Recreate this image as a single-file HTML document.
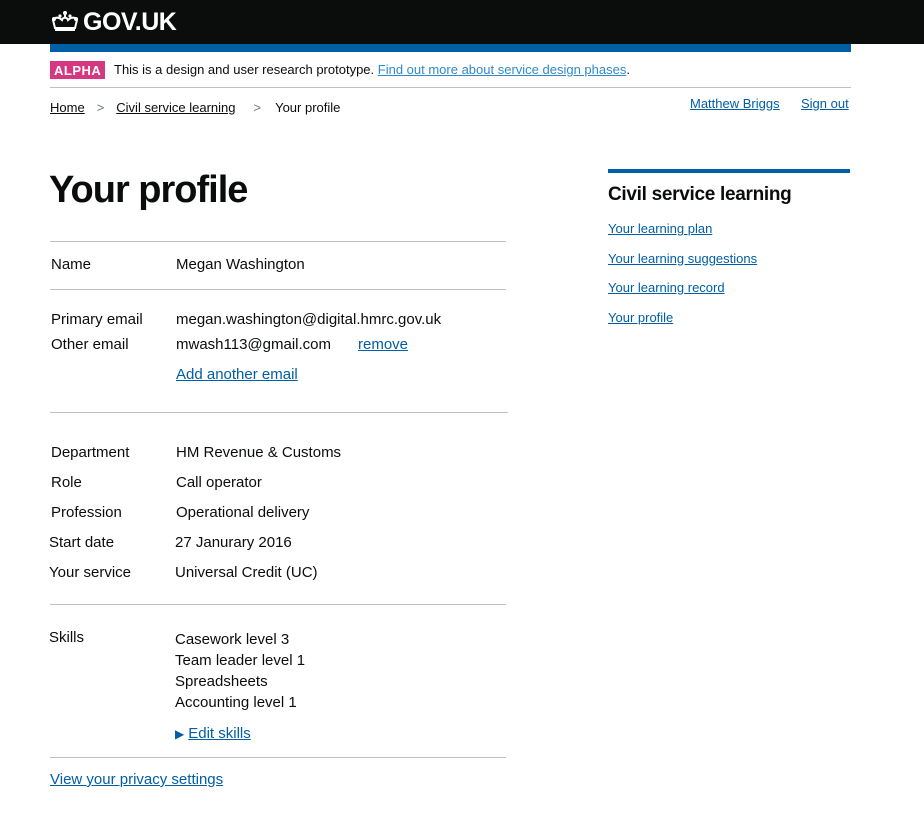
<!DOCTYPE html>
<html><head><meta charset="utf-8"><style>
*{margin:0;padding:0;box-sizing:border-box}
body{width:924px;height:820px;background:#fff;font-family:"Liberation Sans",Arial,sans-serif;color:#0b0c0c;position:relative;overflow:hidden}
.abs{position:absolute;white-space:nowrap}
a{color:#005ea5;text-decoration:underline}
.hdr{position:absolute;left:0;top:0;width:924px;height:44px;background:#0b0c0c}
.blue{position:absolute;left:50px;top:44px;width:801px;height:8px;background:#005ea5}
.hr{position:absolute;height:1px;background:#bfc1c3}
.f15{font-size:15px}
.f13{font-size:13px}
.bc a{color:#0b0c0c}
</style></head><body>
<div class="hdr"></div>
<div class="abs" style="left:50px;top:8px;color:#fff;font-weight:bold;font-size:25px;letter-spacing:-0.5px">
<svg width="30" height="22" viewBox="0 0 30 22" style="vertical-align:-2px;margin-right:3px"><g fill="#fff"><circle cx="15" cy="3" r="2"/><rect x="14" y="1" width="2" height="7"/><path d="M3 10c3-4 7-2 9 0 1-3 5-3 6 0 2-2 6-4 9 0l-2 8H5z" fill="none" stroke="#fff" stroke-width="2"/><rect x="5" y="18" width="20" height="3"/><circle cx="4" cy="9" r="2"/><circle cx="26" cy="9" r="2"/><circle cx="10" cy="6" r="1.6"/><circle cx="20" cy="6" r="1.6"/></g></svg>GOV.UK</div>
<div class="blue"></div>
<div class="abs" style="left:50px;top:61px;background:#d53880;color:#fff;font-weight:bold;font-size:13px;padding:1px 4px;height:18px;line-height:17px;letter-spacing:0.5px">ALPHA</div>
<div class="abs f13" style="left:114px;top:62px">This is a design and user research prototype. <a style="color:#2e8aca">Find out more about service design phases</a>.</div>
<div class="hr" style="left:50px;top:87px;width:801px"></div>
<div class="abs f13 bc" style="left:50px;top:100px"><a>Home</a><span style="color:#6f777b;margin:0 12px">&gt;</span><a>Civil service learning</a><span style="color:#6f777b;margin:0 14px 0 18px">&gt;</span>Your profile</div>
<div class="abs f13" style="left:690px;top:96px"><a>Matthew Briggs</a></div>
<div class="abs f13" style="left:801px;top:96px"><a>Sign out</a></div>

<div class="abs" style="left:49px;top:169px;font-size:38px;font-weight:bold;letter-spacing:-1px">Your profile</div>

<div class="hr" style="left:50px;top:241px;width:456px"></div>
<div class="abs f15" style="left:51px;top:256px">Name</div>
<div class="abs f15" style="left:176px;top:256px">Megan Washington</div>
<div class="hr" style="left:50px;top:289px;width:456px"></div>
<div class="abs f15" style="left:51px;top:311px">Primary email</div>
<div class="abs f15" style="left:176px;top:311px">megan.washington@digital.hmrc.gov.uk</div>
<div class="abs f15" style="left:51px;top:336px">Other email</div>
<div class="abs f15" style="left:176px;top:336px">mwash113@gmail.com</div>
<div class="abs f15" style="left:358px;top:336px"><a>remove</a></div>
<div class="abs f15" style="left:176px;top:366px"><a>Add another email</a></div>
<div class="hr" style="left:50px;top:412px;width:458px"></div>
<div class="abs f15" style="left:51px;top:438px;line-height:30px">Department<br>Role<br>Profession</div>
<div class="abs f15" style="left:49px;top:528px;line-height:30px">Start date<br>Your service</div>
<div class="abs f15" style="left:176px;top:438px;line-height:30px">HM Revenue &amp; Customs<br>Call operator<br>Operational delivery</div>
<div class="abs f15" style="left:175px;top:528px;line-height:30px">27 Janurary 2016<br>Universal Credit (UC)</div>
<div class="hr" style="left:50px;top:604px;width:456px"></div>
<div class="abs f15" style="left:49px;top:629px">Skills</div>
<div class="abs f15" style="left:175px;top:629px;line-height:21px">Casework level 3<br>Team leader level 1<br>Spreadsheets<br>Accounting level 1</div>
<div class="abs f15" style="left:175px;top:725px"><span style="color:#005ea5;font-size:12px;margin-right:4px">&#9654;</span><a>Edit skills</a></div>
<div class="hr" style="left:50px;top:757px;width:456px"></div>
<div class="abs f15" style="left:50px;top:771px"><a>View your privacy settings</a></div>

<div class="abs" style="left:608px;top:169px;width:242px;height:4px;background:#005ea5"></div>
<div class="abs" style="left:608px;top:184px;font-size:19px;font-weight:bold;letter-spacing:-0.3px">Civil service learning</div>
<div class="abs f13" style="left:608px;top:214px;line-height:29.5px"><a>Your learning plan</a><br><a>Your learning suggestions</a><br><a>Your learning record</a><br><a>Your profile</a></div>
</body></html>
